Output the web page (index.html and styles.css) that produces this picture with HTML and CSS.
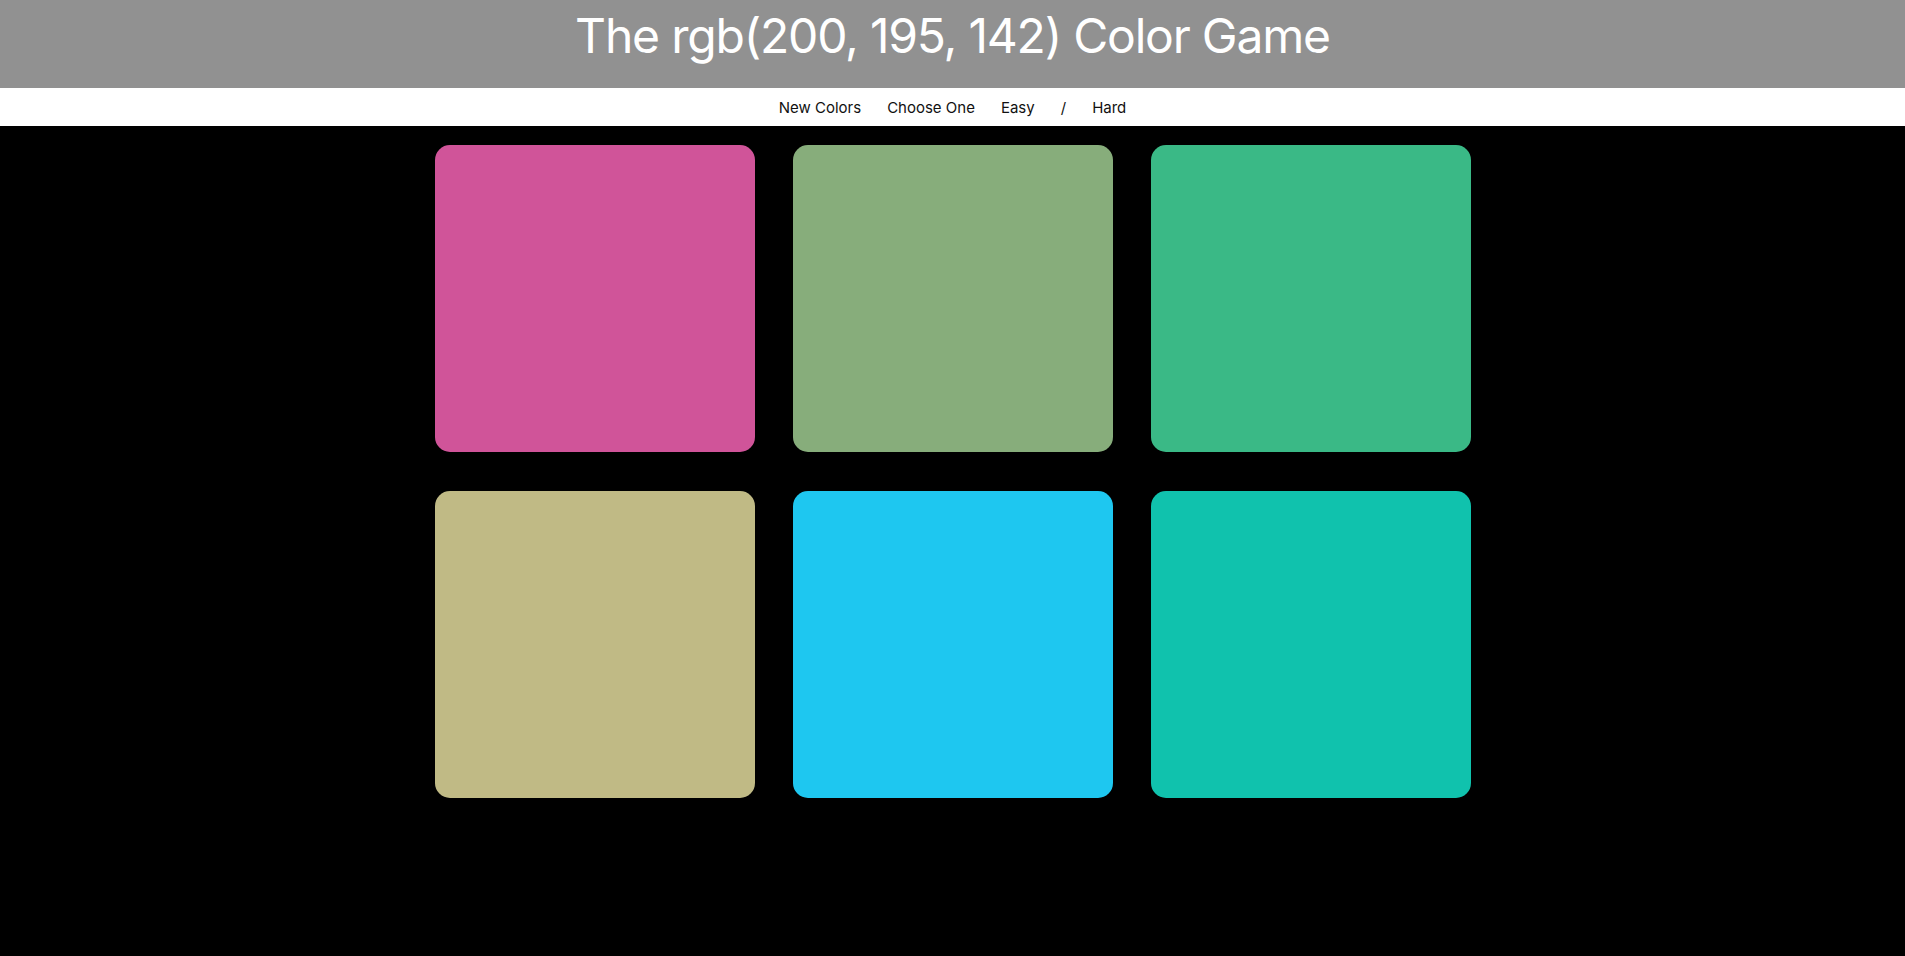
FILE: index.html
```html
<!DOCTYPE html>
<html lang="en">
<head>
  <meta charset="UTF-8" />
  <title>Color Game</title>
  <link rel="stylesheet" href="styles.css">
</head>
<body>

  <header>
    <h1>The <span id="colorDisplay">rgb(200, 195, 142)</span> Color Game</h1>
  </header>

  <nav id="stripe">
    <button id="reset">New Colors</button>
    <span id="message">Choose One</span>
    <button class="mode">Easy</button>
    <span>/</span>
    <button class="mode selected">Hard</button>
  </nav>

  <main id="container">
    <div class="square sq1"></div>
    <div class="square sq2"></div>
    <div class="square sq3"></div>
    <div class="square sq4"></div>
    <div class="square sq5"></div>
    <div class="square sq6"></div>
  </main>

</body>
</html>
```

FILE: styles.css
```css
body {
  font-family: "Inter", "Liberation Sans", sans-serif;
  margin: 0;
  padding: 0;
  background: #000;
}
header {
  background-color: #919191;
  color: white;
  height: 88px;
  box-sizing: border-box;
  padding-bottom: 17px;
  display: flex;
  justify-content: center;
  align-items: center;
}
h1 {
  margin: 0;
  font-weight: 400;
  font-size: 48px;
  letter-spacing: -1.2px;
}
#stripe {
  background: white;
  height: 38px;
  display: flex;
  justify-content: center;
  align-items: center;
  gap: 26px;
  font-size: 15px;
  color: #111;
}
#stripe button {
  background: none;
  border: none;
  padding: 0;
  font: inherit;
  color: inherit;
  cursor: pointer;
}
#container {
  width: 1036px;
  margin: 19px auto 0;
  display: grid;
  grid-template-columns: repeat(3, 320px);
  column-gap: 38px;
  row-gap: 39px;
}
.square {
  height: 307px;
  border-radius: 15px;
}
.sq1 { background: #d05499; }
.sq2 { background: #87ad7b; }
.sq3 { background: #3ab986; }
.sq4 { background: #c0ba85; }
.sq5 { background: #1ec7f0; }
.sq6 { background: #10c2ad; }
```
